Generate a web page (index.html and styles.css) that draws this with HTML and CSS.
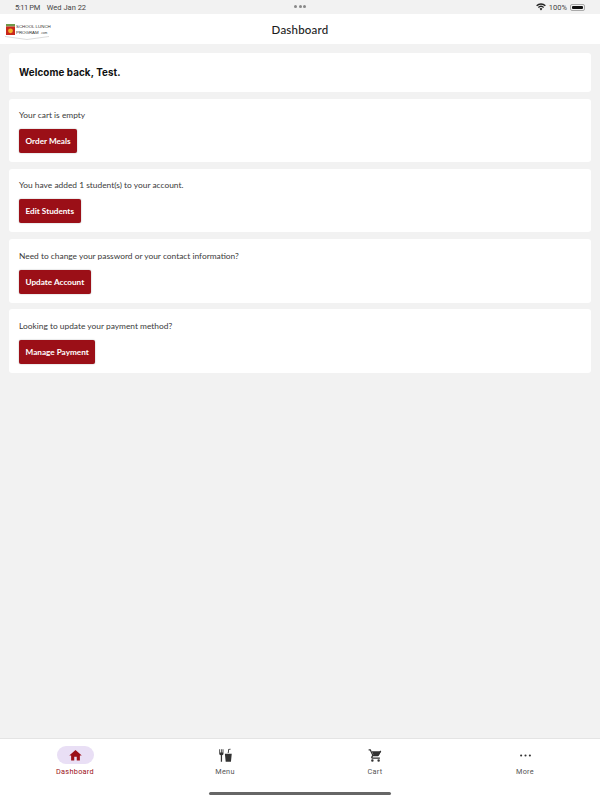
FILE: index.html
```html
<!DOCTYPE html>
<html lang="en">
<head>
  <meta charset="UTF-8">
  <meta name="viewport" content="width=device-width, initial-scale=1.0">
  <title>Dashboard</title>
  <link rel="stylesheet" href="styles.css">
</head>
<body>
  <div class="app">
    <div class="status-bar">
      <div class="status-left"><span class="status-time">5:11 PM</span><span>Wed Jan 22</span></div>
      <div class="status-dots"><i></i><i></i><i></i></div>
      <div class="status-right">
        <svg class="wifi" viewBox="0 0 12 9" width="10" height="8">
          <path d="M6 8.600 4.300 6.700a2.400 2.400 0 0 1 3.400 0zM3.300 5.700 2.300 4.600a5.300 5.300 0 0 1 7.400 0l-1 1.100a3.900 3.900 0 0 0-5.400 0zM1.300 3.600.2 2.500a8.200 8.200 0 0 1 11.600 0l-1.100 1.100a6.700 6.700 0 0 0-9.400 0z"/>
        </svg>
        <span>100%</span>
        <div class="battery"><div class="battery-fill"></div></div>
      </div>
    </div>

    <header class="top-bar">
      <div class="logo">
        <svg class="logo-mark" viewBox="0 0 9 11" width="9" height="11">
          <rect width="9" height="2.500" fill="#6f9a4c"/>
          <rect y="2.500" width="9" height="8.500" fill="#c9271c"/>
          <circle cx="4.500" cy="6.800" r="2.400" fill="#f0b429"/>
        </svg>
        <div class="logo-text">
          <span>SCHOOL LUNCH</span>
          <span>PROGRAM<small>.com</small></span>
        </div>
        <svg class="logo-swoosh" viewBox="0 0 44 4" width="44" height="4">
          <path d="M0 .5 22 3.500 44 .5" fill="none" stroke="#ccc" stroke-width=".7"/>
        </svg>
      </div>
      <h1>Dashboard</h1>
    </header>

    <main class="content">
      <section class="card card-welcome">
        <h2>Welcome back, Test.</h2>
      </section>
      <section class="card">
        <p>Your cart is empty</p>
        <button>Order Meals</button>
      </section>
      <section class="card">
        <p>You have added 1 student(s) to your account.</p>
        <button>Edit Students</button>
      </section>
      <section class="card">
        <p>Need to change your password or your contact information?</p>
        <button>Update Account</button>
      </section>
      <section class="card">
        <p>Looking to update your payment method?</p>
        <button>Manage Payment</button>
      </section>
    </main>

    <nav class="bottom-nav">
      <div class="nav-item active">
        <div class="nav-icon">
          <svg viewBox="0 0 24 24" width="15" height="15"><path d="M10 20v-6h4v6h5v-8h3L12 3 2 12h3v8z"/></svg>
        </div>
        <span>Dashboard</span>
      </div>
      <div class="nav-item">
        <div class="nav-icon">
          <svg viewBox="0 0 24 24" width="15" height="15">
            <path d="M2 2h1.300v5h1.400V2H6v5h1.300V2h1.400v7c0 1.200-.9 2.200-2.200 2.400V22h-2V11.400C3 11.200 2 10.200 2 9z"/>
            <path d="M11 9h11l-1.300 13h-8.400zM15.500 8l1.100-6.500L20 1l.3 1.400-2.500.4L17 8z"/>
          </svg>
        </div>
        <span>Menu</span>
      </div>
      <div class="nav-item">
        <div class="nav-icon">
          <svg viewBox="0 0 24 24" width="15" height="15"><path d="M7 18a2 2 0 1 0 0 4 2 2 0 0 0 0-4zm10 0a2 2 0 1 0 0 4 2 2 0 0 0 0-4zM7.200 14.800v-.1L8.100 13h7.500c.7 0 1.400-.4 1.700-1L21.200 5l-1.700-1-3.900 7H8.500L4.300 2H1v2h2l3.600 7.600L5.200 14c-.7 1.300.2 3 1.800 3h12v-2H7.400a.2.2 0 0 1-.2-.2z"/><path d="M6 5h15l-4 7H9z"/></svg>
        </div>
        <span>Cart</span>
      </div>
      <div class="nav-item">
        <div class="nav-icon">
          <svg viewBox="0 0 24 24" width="15" height="15"><circle cx="5" cy="12" r="1.700"/><circle cx="12" cy="12" r="1.700"/><circle cx="19" cy="12" r="1.700"/></svg>
        </div>
        <span>More</span>
      </div>
      <div class="home-indicator"></div>
    </nav>
  </div>
</body>
</html>
```

FILE: styles.css
```css
* {
  margin: 0;
  padding: 0;
  box-sizing: border-box;
}

body {
  font-family: Lato, "Liberation Sans", sans-serif;
  background: #f2f2f2;
  color: #222;
}

.app {
  width: 600px;
  height: 800px;
  display: flex;
  flex-direction: column;
  overflow: hidden;
}

/* status bar */
.status-bar {
  height: 14px;
  padding: 0 15px;
  display: flex;
  align-items: center;
  justify-content: space-between;
  position: relative;
  font-family: Roboto, sans-serif;
  font-size: 7.500px;
  color: #444;
  background: #f2f2f2;
}

.status-left {
  display: flex;
  gap: 7px;
}

.status-time {
  letter-spacing: -0.4px;
}

.status-dots {
  position: absolute;
  left: 294px;
  top: 5px;
  display: flex;
  gap: 1.500px;
}

.status-dots i {
  width: 3px;
  height: 3px;
  border-radius: 50%;
  background: #888;
}

.status-right {
  display: flex;
  align-items: center;
  gap: 3px;
}

.wifi {
  fill: #222;
}

.battery {
  width: 15px;
  height: 7px;
  padding: 1px;
  border: 1px solid #aaa;
  border-radius: 2px;
}

.battery-fill {
  height: 100%;
  background: #111;
  border-radius: 1px;
}

/* header */
.top-bar {
  height: 30px;
  background: #fff;
  display: flex;
  align-items: center;
  justify-content: center;
  position: relative;
}

.top-bar h1 {
  font-size: 11.500px;
  font-weight: 500;
  color: #1c1c1c;
  letter-spacing: 0.2px;
}

.logo {
  position: absolute;
  left: 6px;
  top: 10px;
  width: 46px;
  display: flex;
  flex-wrap: wrap;
  column-gap: 1px;
}

.logo-text {
  display: flex;
  flex-direction: column;
  font-family: "Liberation Sans", sans-serif;
  font-size: 4.400px;
  line-height: 5.500px;
  color: #333;
  white-space: nowrap;
}

.logo-text small {
  font-size: 3px;
  margin-left: 2px;
}

.logo-swoosh {
  display: block;
  margin: 0 0 0 -1px;
}

/* cards */
.content {
  flex: 1;
  padding: 9px;
  display: flex;
  flex-direction: column;
  gap: 6.700px;
}

.card {
  background: #fff;
  border-radius: 3px;
  padding: 11.500px 10px 0;
  height: 63.500px;
}

.card-welcome {
  height: 39px;
  padding: 14px 10px 0;
}

.card h2 {
  font-family: Inter, "Open Sans", sans-serif;
  font-size: 9.800px;
  font-weight: 700;
  letter-spacing: 0.1px;
  color: #111;
}

.card p {
  font-size: 8.400px;
  line-height: 10px;
  color: #3a3a3a;
  margin-bottom: 8px;
}

button {
  height: 24px;
  padding: 0 6.500px;
  background: #9b0f17;
  color: #fff;
  border: none;
  border-radius: 2px;
  box-shadow: 0 0 1.500px rgba(0, 0, 0, 0.4);
  font-family: Lato, sans-serif;
  font-size: 8.200px;
  font-weight: 700;
}

/* bottom nav */
.bottom-nav {
  height: 62px;
  background: #fff;
  border-top: 1px solid #e4e4e4;
  display: grid;
  grid-template-columns: repeat(4, 150px);
  position: relative;
}

.nav-item {
  display: flex;
  flex-direction: column;
  align-items: center;
  padding-top: 7px;
  font-family: Roboto, sans-serif;
  font-size: 7.300px;
  letter-spacing: 0.3px;
  color: #555;
}

.nav-icon {
  width: 37px;
  height: 18px;
  border-radius: 9px;
  display: flex;
  align-items: center;
  justify-content: center;
  margin-bottom: 3px;
}

.nav-icon svg {
  fill: #333;
}

.nav-item.active {
  color: #9b0f17;
}

.nav-item.active .nav-icon {
  background: #e9dff5;
}

.nav-item.active .nav-icon svg {
  fill: #9b0f17;
}

.home-indicator {
  position: absolute;
  left: 209px;
  bottom: 5px;
  width: 182px;
  height: 3px;
  border-radius: 2px;
  background: #666;
}
```
